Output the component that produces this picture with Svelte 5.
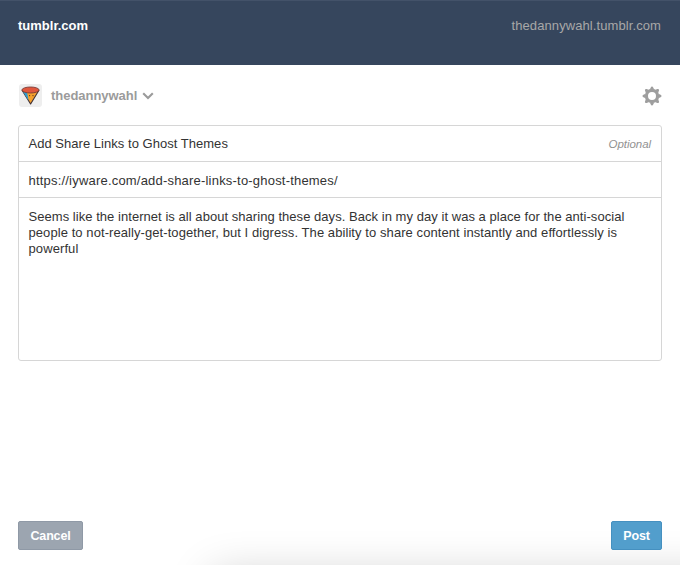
<script>
  const body = [
    { text: 'Seems like the internet is all about sharing these days. Back in my day it was a place for the anti-social', gap: 0.045 },
    { text: 'people to not-really-get-together, but I digress. The ability to share content instantly and effortlessly is', gap: 0.075 },
    { text: 'powerful', gap: 0.1 }
  ];
  const teeth = [0, 45, 90, 135, 180, 225, 270, 315];
</script>

<div class="page">
  <header>
    <strong>tumblr.com</strong>
    <span class="blog">thedannywahl.tumblr.com</span>
  </header>

  <div class="toolbar">
    <div class="avatar">
      <svg width="23" height="23" viewBox="0 0 23 23">
        <path d="M3.2 6.5 L11.6 20 L19.8 6.5Z" fill="#f6a02c" stroke="#403034" stroke-width="1.1" stroke-linejoin="round" />
        <path d="M3.8 7.5 L9.6 16.8 L8.2 9Z" fill="#2e9bd0" />
        <ellipse cx="11.5" cy="6" rx="8.6" ry="3" fill="#e0563c" stroke="#7b3a35" stroke-width="0.9" />
        <path d="M10.6 11v1.2M14 11v1.2" stroke="#57331f" stroke-width="1" fill="none" />
      </svg>
    </div>
    <span class="user">thedannywahl</span>
    <svg class="chevron" width="12" height="8" viewBox="0 0 12 8"><path d="M1.2 1.2 L6 6 L10.8 1.2" fill="none" stroke="#9b9b9b" stroke-width="2.1" /></svg>
    <svg class="gear" width="20" height="20" viewBox="-10 -10 20 20">
      <circle r="5.6" fill="none" stroke="#9e9e9e" stroke-width="3.2" />
      {#each teeth as angle}
        <path d="M-2.2 -6.4 L-1.2 -8.6 Q-0.9 -9.5 0 -9.5 Q0.9 -9.5 1.2 -8.6 L2.2 -6.4Z" fill="#9e9e9e" transform="rotate({angle})" />
      {/each}
    </svg>
  </div>

  <main>
    <div class="row title"><span class="t1">Add Share Links to Ghost Themes</span><em>Optional</em></div>
    <div class="row link"><span class="t2">https://iyware.com/add-share-links-to-ghost-themes/</span></div>
    <div class="copy">
      {#each body as line}
        <div><span style="letter-spacing: {line.gap}px">{line.text}</span></div>
      {/each}
    </div>
  </main>

  <footer>
    <button class="cancel">Cancel</button>
    <button class="post">Post</button>
  </footer>
  <div class="shade"></div>
</div>

<style>
  .page { position: relative; width: 680px; height: 565px; overflow: hidden; background: #fff; display: flex; flex-direction: column; font-family: "Liberation Sans", Arial, sans-serif; font-size: 13px; color: #333; box-sizing: border-box; }
  header { height: 65px; flex: none; box-sizing: border-box; background: #36465d; border-top: 1px solid #435269; padding: 17px 19px 0 18px; display: flex; justify-content: space-between; line-height: 16px; }
  header strong { color: #fff; }
  .blog { color: #a8a8a8; letter-spacing: 0.09px; }
  .toolbar { height: 60px; flex: none; display: flex; align-items: center; padding: 0 18px 0 19px; }
  .avatar { width: 23px; height: 23px; background: #eee; border-radius: 3px; }
  .avatar svg { display: block; }
  .user { margin-left: 9px; font-weight: bold; color: #9b9b9b; line-height: 16px; padding-top: 2px; letter-spacing: -0.03px; }
  .chevron { margin-left: 5px; margin-top: 2px; }
  .gear { margin-left: auto; margin-top: 2px; }
  main { margin: 0 18px; height: 236px; flex: none; box-sizing: border-box; border: 1px solid #d6d6d6; border-radius: 3px; display: flex; flex-direction: column; }
  .row { height: 36px; box-sizing: border-box; border-bottom: 1px solid #d6d6d6; padding: 0 10px 0 9.5px; display: flex; justify-content: space-between; align-items: center; white-space: nowrap; }
  .link { padding-top: 1px; }
  .row em { color: #929292; font-size: 11.5px; letter-spacing: -0.05px; }
  .t1 { letter-spacing: 0.03px; }
  .t2 { letter-spacing: 0.2px; }
  .copy { padding: 11px 9px 0 9.5px; line-height: 16px; white-space: nowrap; }
  footer { margin-top: auto; padding: 0 18px 15px; display: flex; justify-content: space-between; position: relative; z-index: 1; }
  button { height: 29px; margin: 0; padding: 0; border: 1px solid; border-radius: 2px; color: #fff; font: bold 12.5px "Liberation Sans", Arial, sans-serif; }
  .cancel { width: 65px; background: #9ca5b0; border-color: #8f99a6; letter-spacing: -0.15px; }
  .post { width: 51px; background: #529ecc; border-color: #4590c0; letter-spacing: -0.1px; }
  .shade { position: absolute; left: 212px; top: 575px; width: 680px; height: 60px; box-shadow: 0 0 46px rgba(0, 0, 0, 0.2); }
</style>
